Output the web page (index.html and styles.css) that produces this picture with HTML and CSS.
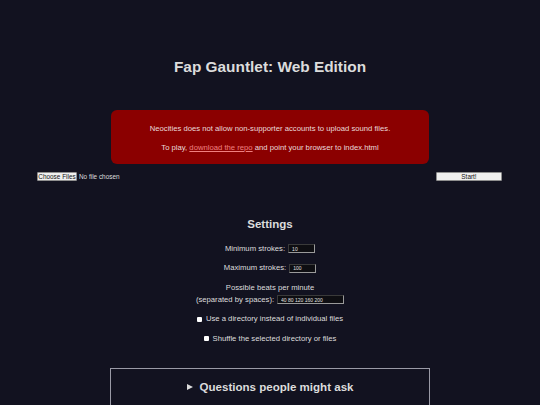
FILE: index.html
```html
<!DOCTYPE html>
<html>
<head>
<meta charset="utf-8">
<title>Fap Gauntlet: Web Edition</title>
<link rel="stylesheet" href="styles.css">
</head>
<body>
<div class="page">
  <h1 class="title">Fap Gauntlet: Web Edition</h1>
  <div class="notice">
    <p>Neocities does not allow non-supporter accounts to upload sound files.</p>
    <p>To play, <a href="#">download the repo</a> and point your browser to index.html</p>
  </div>
  <div class="controls">
    <label class="file">
      <span class="file-btn">Choose Files</span>
      <span class="file-name">No file chosen</span>
    </label>
    <button class="start">Start!</button>
  </div>
  <h2 class="settings-title">Settings</h2>
  <div class="settings">
    <div class="row"><span>Minimum strokes:</span><input class="field small" type="text" value="10"></div>
    <div class="row"><span>Maximum strokes:</span><input class="field small" type="text" value="100"></div>
    <div class="row col">
      <span>Possible beats per minute</span>
      <span class="inline">(separated by spaces):<input class="field wide" type="text" value="40 80 120 160 200"></span>
    </div>
    <div class="row"><span class="check"></span><span>Use a directory instead of individual files</span></div>
    <div class="row"><span class="check"></span><span>Shuffle the selected directory or files</span></div>
  </div>
  <details class="faq">
    <summary><span class="tri"></span>Questions people might ask</summary>
  </details>
</div>
</body>
</html>
```

FILE: styles.css
```css
html, body {
  margin: 0;
  padding: 0;
  background: #121220;
}
body {
  font-family: "Liberation Sans", Arial, sans-serif;
  font-size: 7.7px;
  color: #dedede;
  overflow: hidden;
}
.page {
  width: 466px;
  height: 405px;
  overflow: hidden;
  margin: 0 auto;
  display: flex;
  flex-direction: column;
  align-items: center;
}
.title {
  margin: 58px 0 0;
  font-size: 15.4px;
  line-height: 18px;
  font-weight: bold;
  color: #dcdcdc;
}
.notice {
  margin-top: 34px;
  width: 318px;
  box-sizing: border-box;
  padding: 8.5px 0 7.5px;
  background: #8b0000;
  border-radius: 6px;
  text-align: center;
  color: #eadada;
}
.notice p {
  margin: 0;
  line-height: 19px;
}
.notice a {
  color: #f08080;
  text-decoration: underline;
}
.controls {
  margin-top: 8px;
  width: 100%;
  display: flex;
  justify-content: space-between;
  align-items: center;
  height: 9px;
}
.file {
  display: flex;
  align-items: center;
  font-size: 6.4px;
}
.file-btn, .start {
  font-family: "Liberation Sans", Arial, sans-serif;
  font-size: 6.4px;
  color: #111;
  background: #efefef;
  border: 1px solid #8f8f8f;
  border-radius: 1px;
  box-sizing: border-box;
  height: 9px;
  line-height: 7px;
  padding: 0;
  text-align: center;
}
.file-btn {
  width: 40px;
  margin-right: 2px;
}
.file-name {
  color: #dedede;
}
.start {
  width: 66px;
  margin-right: 1px;
}
.settings-title {
  margin: 37px 0 0;
  font-size: 11.55px;
  line-height: 13px;
  font-weight: bold;
  color: #dcdcdc;
}
.settings {
  margin-top: 11.6px;
  display: flex;
  flex-direction: column;
  align-items: center;
  gap: 7.5px;
}
.row {
  display: flex;
  align-items: center;
  justify-content: center;
  line-height: 12px;
  height: 12px;
}
.row.col {
  flex-direction: column;
  height: 24px;
}
.inline {
  display: flex;
  align-items: center;
}
.field {
  box-sizing: border-box;
  height: 9px;
  margin: 0 0 0 3px;
  padding: 0 0 0 3px;
  background: #0e0e12;
  color: #e0e0e0;
  font-family: "Liberation Sans", Arial, sans-serif;
  font-size: 5px;
  border-style: solid;
  border-width: 1px;
  border-color: #3a3a3a #9a9a9a #9a9a9a #3a3a3a;
  outline: none;
}
.small { width: 27px; }
.wide { width: 67px; }
.check {
  width: 5px;
  height: 5px;
  background: #fff;
  border-radius: 1px;
  margin-right: 4px;
}
.faq {
  flex-shrink: 0;
  margin-top: 23.4px;
  width: 320px;
  box-sizing: border-box;
  border: 1px solid #9a9aa6;
  border-bottom: none;
  padding-top: 12px;
  height: 40px;
}
.faq summary {
  list-style: none;
  display: flex;
  align-items: center;
  justify-content: center;
  font-size: 11.55px;
  line-height: 13px;
  font-weight: bold;
  color: #dcdcdc;
}
.faq summary::-webkit-details-marker { display: none; }
.tri {
  width: 0;
  height: 0;
  border-style: solid;
  border-width: 3px 0 3px 6px;
  border-color: transparent transparent transparent #dcdcdc;
  margin-right: 7px;
}
```
